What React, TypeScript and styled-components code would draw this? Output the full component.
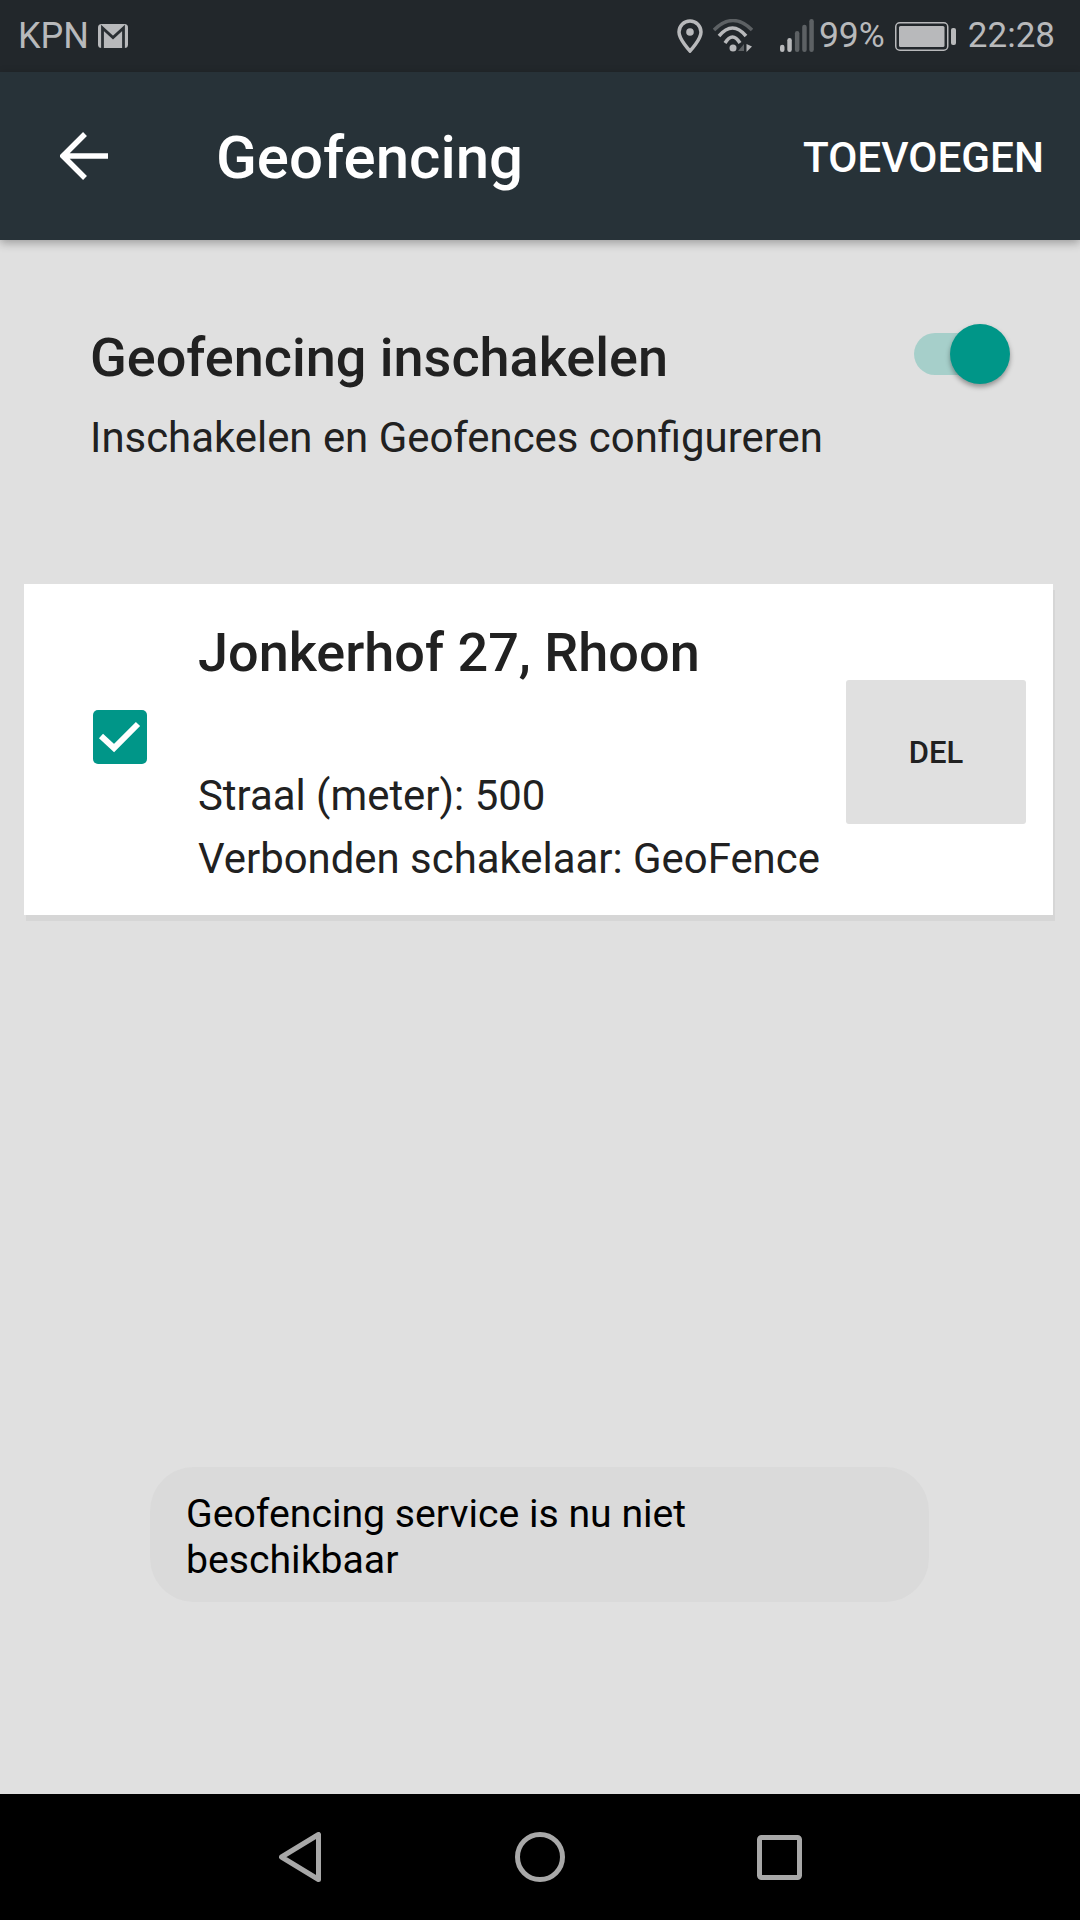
import React from "react";
import styled, { createGlobalStyle } from "styled-components";

const GlobalStyle = createGlobalStyle`
  html, body {
    margin: 0;
    padding: 0;
    background: #e0e0e0;
  }
  * {
    box-sizing: border-box;
  }
`;

const Screen = styled.div`
  position: relative;
  display: flex;
  flex-direction: column;
  width: 1080px;
  height: 1920px;
  overflow: hidden;
  background: #e0e0e0;
  font-family: Roboto, "Liberation Sans", sans-serif;
  color: #212121;
`;

const StatusBar = styled.div`
  display: flex;
  align-items: center;
  justify-content: space-between;
  height: 72px;
  padding: 0 25px 0 18px;
  background: #22272b;
  color: #b8b9bb;
`;

const StatusGroup = styled.div`
  display: flex;
  align-items: center;
`;

const StatusText = styled.span<{ $size?: number; $left?: number; $top?: number }>`
  margin-left: ${(p) => p.$left ?? 0}px;
  margin-top: ${(p) => p.$top ?? 0}px;
  font-size: ${(p) => p.$size ?? 35}px;
  line-height: 40px;
`;

const StatusIcon = styled.svg<{ $left: number }>`
  display: block;
  flex: none;
  margin-left: ${(p) => p.$left}px;
`;

const AppBar = styled.div`
  position: relative;
  z-index: 1;
  display: flex;
  align-items: center;
  height: 168px;
  padding: 0 36px 0 60px;
  background: #273238;
  color: #ffffff;
  box-shadow: 0 3px 9px rgba(0, 0, 0, 0.3);
`;

const BackIcon = styled.svg`
  display: block;
  flex: none;
`;

const AppTitle = styled.div`
  flex: 1;
  margin: 4px 0 0 108px;
  font-size: 60px;
  font-weight: 500;
  line-height: 64px;
`;

const AppAction = styled.div`
  margin-top: 3px;
  font-size: 42.300px;
  font-weight: 500;
  line-height: 48px;
`;

const Content = styled.div`
  flex: 1;
  display: flex;
  flex-direction: column;
  padding: 86px 27px 0 24px;
`;

const EnableRow = styled.div`
  display: flex;
  align-items: flex-start;
  justify-content: space-between;
  padding-left: 66px;
`;

const EnableTitle = styled.div`
  font-size: 54px;
  font-weight: 500;
  line-height: 64px;
`;

const EnableSub = styled.div`
  margin-top: 24px;
  font-size: 41.900px;
  line-height: 48px;
`;

const Switch = styled.div`
  position: relative;
  flex: none;
  width: 86px;
  height: 42px;
  margin: 7px 53px 0 0;
  border-radius: 21px;
  background: #a6cfca;
`;

const SwitchThumb = styled.div`
  position: absolute;
  top: -9px;
  right: -10px;
  width: 60px;
  height: 60px;
  border-radius: 50%;
  background: #009688;
  box-shadow: 0 3px 5px rgba(0, 0, 0, 0.35);
`;

const Card = styled.div`
  display: flex;
  align-items: center;
  height: 331px;
  margin-top: 122px;
  padding: 0 27px 0 69px;
  background: #ffffff;
  box-shadow: 2px 6px 0 #d6d6d6;
`;

const CheckBox = styled.svg`
  display: block;
  flex: none;
  margin-bottom: 25px;
`;

const CardText = styled.div`
  flex: 1;
  align-self: flex-start;
  margin-left: 51px;
  padding-top: 37px;
`;

const CardTitle = styled.div`
  margin-bottom: 79px;
  font-size: 54px;
  font-weight: 500;
  line-height: 64px;
`;

const CardLine = styled.div`
  font-size: 41.900px;
  line-height: 63px;
  white-space: nowrap;
`;

const DeleteButton = styled.div`
  display: flex;
  align-items: center;
  justify-content: center;
  flex: none;
  width: 180px;
  height: 144px;
  margin-top: 5px;
  border-radius: 3px;
  background: #e0e0e0;
  font-size: 31px;
  font-weight: 500;
`;

const Toast = styled.div`
  position: absolute;
  top: 1467px;
  left: 150px;
  width: 779px;
  height: 135px;
  padding: 24px 36px 0;
  border-radius: 44px;
  background: #dadada;
  color: #000000;
  font-size: 39.200px;
  line-height: 46px;
`;

const NavBar = styled.div`
  display: flex;
  align-items: center;
  justify-content: center;
  height: 126px;
  background: #000000;
`;

const NavIcon = styled.svg<{ $left: number }>`
  display: block;
  flex: none;
  margin-left: ${(p) => p.$left}px;
`;

const signalBars = [
  { x: 1, top: 25.7, on: true },
  { x: 8.3, top: 19, on: true },
  { x: 15.9, top: 12, on: false },
  { x: 23.2, top: 5.7, on: false },
  { x: 30.3, top: 0, on: false },
];

const App = () => {
  return (
    <Screen>
      <GlobalStyle />
      <StatusBar>
        <StatusGroup>
          <StatusText $size={36}>KPN</StatusText>
          <StatusIcon $left={9} width="30" height="24" viewBox="0 0 30 24">
            <rect x="0" y="0" width="30" height="24" rx="3.500" fill="#b8b9bb" />
            <path d="M4.500 24V4l10.500 9.500L25.500 4v20" fill="none" stroke="#2a2f33" strokeWidth="2.800" />
          </StatusIcon>
        </StatusGroup>
        <StatusGroup>
          <StatusIcon $left={0} width="26" height="34" viewBox="0 0 26 34">
            <path
              d="M13 2C6.9 2 2 6.9 2 13c0 7.5 11 19 11 19s11-11.500 11-19C24 6.900 19.100 2 13 2z"
              fill="none"
              stroke="#b8b9bb"
              strokeWidth="3.500"
            />
            <circle cx="13" cy="13" r="3.800" fill="#b8b9bb" />
          </StatusIcon>
          <StatusIcon $left={10} width="40" height="34" viewBox="0 0 40 34">
            <path d="M1 11Q20 -8 39 11" fill="none" stroke="#5d6164" strokeWidth="3.500" />
            <path d="M6 17Q19.500 1 33 17" fill="none" stroke="#b8b9bb" strokeWidth="3.500" />
            <path d="M12 24Q19.500 12 27 24" fill="none" stroke="#b8b9bb" strokeWidth="3.500" />
            <circle cx="20" cy="29" r="3.500" fill="#b8b9bb" />
            <path d="M31 25l-6 7h6z" fill="#5d6164" />
            <path d="M33.500 25v8l5.500-5.500z" fill="#b8b9bb" />
          </StatusIcon>
          <StatusIcon $left={26} width="36" height="34" viewBox="0 0 36 34">
            {signalBars.map((bar) => (
              <rect
                key={bar.x}
                x={bar.x}
                y={bar.top}
                width="4.500"
                height={33 - bar.top}
                rx="2.250"
                fill={bar.on ? "#b8b9bb" : "#5d6164"}
              />
            ))}
          </StatusIcon>
          <StatusText $left={4} $size={35.5} $top={-3}>
            99%
          </StatusText>
          <StatusIcon $left={10} width="61" height="29" viewBox="0 0 61 29">
            <rect x="0.750" y="0.750" width="52" height="27.500" rx="4" fill="none" stroke="#b8b9bb" strokeWidth="1.500" />
            <rect x="4" y="4" width="45.500" height="21" rx="1.500" fill="#b8b9bb" />
            <rect x="56" y="6" width="5" height="17" rx="2" fill="#b8b9bb" />
          </StatusIcon>
          <StatusText $left={12}>22:28</StatusText>
        </StatusGroup>
      </StatusBar>

      <AppBar>
        <BackIcon width="48" height="50" viewBox="0 0 48 50">
          <path d="M48 25H4M25 3L3 25l22 22" fill="none" stroke="#ffffff" strokeWidth="5.500" />
        </BackIcon>
        <AppTitle>Geofencing</AppTitle>
        <AppAction>TOEVOEGEN</AppAction>
      </AppBar>

      <Content>
        <EnableRow>
          <div>
            <EnableTitle>Geofencing inschakelen</EnableTitle>
            <EnableSub>Inschakelen en Geofences configureren</EnableSub>
          </div>
          <Switch>
            <SwitchThumb />
          </Switch>
        </EnableRow>

        <Card>
          <CheckBox width="54" height="54" viewBox="0 0 54 54">
            <rect width="54" height="54" rx="5" fill="#009688" />
            <path d="M8 26l13 12L45 14" fill="none" stroke="#ffffff" strokeWidth="6" />
          </CheckBox>
          <CardText>
            <CardTitle>Jonkerhof 27, Rhoon</CardTitle>
            <CardLine>Straal (meter): 500</CardLine>
            <CardLine>Verbonden schakelaar: GeoFence</CardLine>
          </CardText>
          <DeleteButton>DEL</DeleteButton>
        </Card>
      </Content>

      <Toast>Geofencing service is nu niet beschikbaar</Toast>

      <NavBar>
        <NavIcon $left={0} width="42" height="50" viewBox="0 0 42 50">
          <path d="M39.500 2.500v45L2.500 25z" fill="none" stroke="#a8a8a8" strokeWidth="5" strokeLinejoin="round" />
        </NavIcon>
        <NavIcon $left={194} width="50" height="50" viewBox="0 0 50 50">
          <circle cx="25" cy="25" r="22.500" fill="none" stroke="#a8a8a8" strokeWidth="5" />
        </NavIcon>
        <NavIcon $left={192} width="45" height="45" viewBox="0 0 45 45">
          <rect x="2.500" y="2.500" width="40" height="40" rx="2" fill="none" stroke="#a8a8a8" strokeWidth="5" />
        </NavIcon>
      </NavBar>
    </Screen>
  );
};

export default App;
